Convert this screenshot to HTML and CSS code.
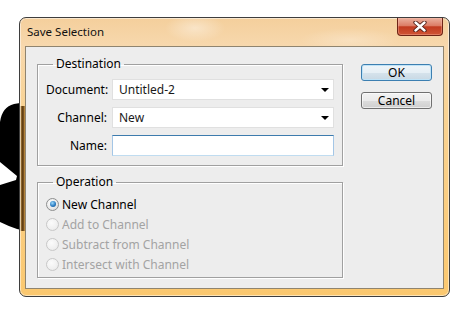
FILE: index.html
```html
<!DOCTYPE html>
<html lang="en">
<head>
  <meta charset="UTF-8">
  <title>Save Selection</title>
  <link rel="stylesheet" href="styles.css">
</head>
<body>
  <div class="desktop">
    <svg class="blob" width="26" height="312" viewBox="0 0 26 312">
      <path d="M26,102 L26,231 L17,229 Q8,226 0,222 L0,185 L16,180 L17,176 L0,162 L0,122 Q2,107 14,104 Z" fill="#000"/>
    </svg>

    <div class="window">
      <div class="titlebar">
        <span class="title">Save Selection</span>
        <button class="close-btn">
          <svg width="16" height="11" viewBox="0 0 16 11">
            <path d="M3.5,1.5 L12.5,9.5 M12.5,1.5 L3.5,9.5" stroke="#4a1a12" stroke-width="4.2" stroke-linecap="round"/>
            <path d="M3.5,1.5 L12.5,9.5 M12.5,1.5 L3.5,9.5" stroke="#fff" stroke-width="2.4" stroke-linecap="round"/>
          </svg>
        </button>
      </div>

      <div class="client">
        <div class="main-col">
          <fieldset class="group dest">
            <legend>Destination</legend>
            <div class="field-row">
              <label>Document:</label>
              <div class="select"><span>Untitled-2</span><i class="arrow"></i></div>
            </div>
            <div class="field-row">
              <label>Channel:</label>
              <div class="select"><span>New</span><i class="arrow"></i></div>
            </div>
            <div class="field-row">
              <label>Name:</label>
              <input type="text" class="text-input">
            </div>
          </fieldset>

          <fieldset class="group ops">
            <legend>Operation</legend>
            <div class="radio-row checked"><span class="radio"></span>New Channel</div>
            <div class="radio-row disabled"><span class="radio"></span>Add to Channel</div>
            <div class="radio-row disabled"><span class="radio"></span>Subtract from Channel</div>
            <div class="radio-row disabled"><span class="radio"></span>Intersect with Channel</div>
          </fieldset>
        </div>

        <div class="btn-col">
          <button class="btn default">OK</button>
          <button class="btn">Cancel</button>
        </div>
      </div>
    </div>
  </div>
</body>
</html>
```

FILE: styles.css
```css
body {
  margin: 0;
  background-color: #fff;
  font-family: "Noto Sans", sans-serif;
  font-size: 12px;
  color: #000;
}

.desktop {
  position: relative;
  width: 464px;
  height: 312px;
  padding: 17px 0 0 19px;
  box-sizing: border-box;
  overflow: hidden;
}

.blob {
  position: absolute;
  left: 0;
  top: 0;
}

.window {
  position: relative;
  width: 431px;
  height: 280px;
  box-sizing: border-box;
  border: 1px solid #3e3e3e;
  border-radius: 7px;
  display: flex;
  flex-direction: column;
  box-shadow: inset 0 0 0 1px rgba(255, 255, 255, 0.5);
  background:
    linear-gradient(to right, #e0ad5c 0, #5e3d12 45%, #7c5320 75%, #d9a44e 100%) 0 88px / 5px 125px no-repeat,
    radial-gradient(ellipse 30px 14px at 175px 10px, rgba(255, 255, 255, 0.4), rgba(255, 255, 255, 0)),
    radial-gradient(ellipse 50px 12px at 330px 22px, rgba(255, 255, 255, 0.25), rgba(255, 255, 255, 0)),
    linear-gradient(to bottom, #f4cf9c 0, #f7d8ad 28px, #f9d394 90px, #fbc86f 100%);
}

.titlebar {
  height: 28px;
  flex: none;
  display: flex;
  align-items: flex-start;
  padding: 0 6px 0 7px;
}

.title {
  flex: 1;
  line-height: 28px;
  font-size: 11.5px;
  color: #111;
}

.close-btn {
  width: 46px;
  height: 18px;
  padding: 0;
  border: 1px solid #6e2416;
  border-top: none;
  border-radius: 0 0 4px 4px;
  background: linear-gradient(to bottom, #ebb09e 0, #dc7d66 45%, #c23b20 52%, #cf5536 100%);
  box-shadow: inset 0 0 0 1px rgba(255, 200, 180, 0.35);
  display: flex;
  align-items: center;
  justify-content: center;
}

.client {
  flex: 1;
  margin: 0 5px 7px;
  border: 1px solid #8f846f;
  background-color: #ededed;
  padding: 9px 11px 0;
  display: flex;
  gap: 18px;
}

.main-col {
  width: 306px;
}

.group {
  margin: 0;
  border: 1px solid #a0a0a0;
  padding: 7px 8px 9px;
  box-shadow: 1px 1px 0 #fff, inset 1px 1px 0 #fff;
}

.group legend {
  margin-left: 7px;
  padding: 0 3px;
  line-height: 16px;
}

.field-row {
  display: flex;
  align-items: center;
  gap: 5px;
  height: 21px;
  margin-bottom: 7px;
}

.field-row:last-child {
  margin-bottom: 0;
}

.field-row label {
  width: 61px;
  text-align: right;
  white-space: nowrap;
}

.select {
  flex: 1;
  height: 21px;
  box-sizing: border-box;
  border: 1px solid #e0e0e0;
  background-color: #fff;
  padding: 0 4px 0 6px;
  display: flex;
  align-items: center;
  color: #1a1a1a;
}

.arrow {
  margin-left: auto;
  width: 0;
  height: 0;
  border-left: 4px solid transparent;
  border-right: 4px solid transparent;
  border-top: 4px solid #000;
}

.text-input {
  flex: 1;
  height: 21px;
  box-sizing: border-box;
  margin: 0;
  border: 1px solid;
  border-color: #3d7bad #a4c6e6 #c0dcf0 #a4c6e6;
  background-color: #fff;
  outline: none;
}

.ops {
  margin-top: 8px;
  padding: 4px 8px 3px;
}

.radio-row {
  height: 20px;
  display: flex;
  align-items: center;
  gap: 3px;
  white-space: nowrap;
}

.radio {
  width: 13px;
  height: 13px;
  box-sizing: border-box;
  border-radius: 50%;
  border: 1px solid #8e8f8f;
  background: radial-gradient(circle at 40% 35%, #fff 0, #e8e8e8 60%, #cfcfcf 100%);
  display: flex;
  align-items: center;
  justify-content: center;
}

.checked .radio::after {
  content: "";
  width: 6px;
  height: 6px;
  border-radius: 50%;
  background: radial-gradient(circle at 40% 35%, #9ad8fb 0, #2b7cc2 55%, #124e8a 100%);
}

.disabled {
  color: #a3a3a3;
}

.disabled .radio {
  border-color: #c8c8c8;
  background: radial-gradient(circle at 40% 35%, #fbfbfb 0, #f0f0f0 60%, #e2e2e2 100%);
}

.btn-col {
  width: 71px;
  padding-top: 8px;
  display: flex;
  flex-direction: column;
  gap: 11px;
}

.btn {
  height: 17px;
  padding: 0;
  font-family: "Noto Sans", sans-serif;
  font-size: 12px;
  line-height: 15px;
  color: #000;
  border: 1px solid #707070;
  border-radius: 3px;
  background: linear-gradient(to bottom, #f2f2f2 0, #ebebeb 50%, #dddddd 51%, #cfcfcf 100%);
  box-shadow: inset 0 0 0 1px rgba(255, 255, 255, 0.6);
}

.btn.default {
  border-color: #3c7fb1;
  background: linear-gradient(to bottom, #eef5f9 0, #e6eff5 50%, #d6e3ec 51%, #c8d8e4 100%);
  box-shadow: inset 0 0 0 1px #bfe3f7;
}
```
